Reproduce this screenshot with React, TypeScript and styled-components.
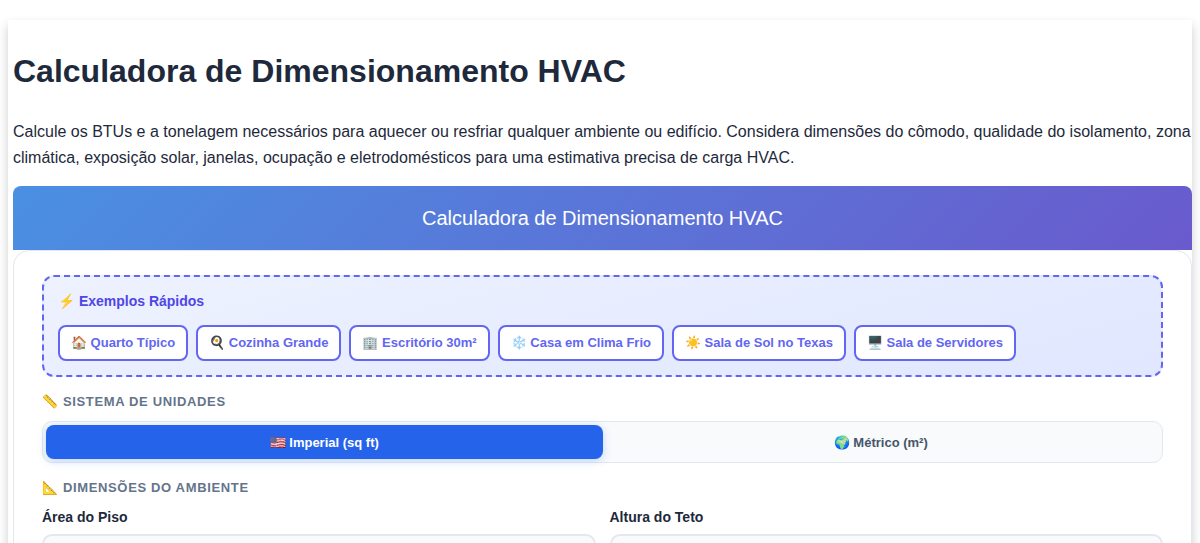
import React, { useState } from "react";
import styled, { createGlobalStyle } from "styled-components";

const GlobalStyle = createGlobalStyle`
  *, *::before, *::after { box-sizing: border-box; }
  body {
    margin: 0;
    background: #ffffff;
    color: #1e293b;
    font-family: "Liberation Sans", Arial, sans-serif;
    font-size: 16px;
    line-height: 26px;
  }
  button, input { font-family: inherit; }
`;

const Page = styled.main`
  margin: 20px 8px;
  padding: 25px 0 28px 5px;
  background: #ffffff;
  box-shadow: 0 5px 10px rgba(0, 0, 0, 0.2);
`;

const PageTitle = styled.h1`
  margin: 0;
  font-size: 32px;
  line-height: 52px;
  font-weight: 700;
`;

const Intro = styled.p`
  margin: 22px 0 15px;
`;

const Banner = styled.header`
  padding: 16px;
  border-radius: 8px 8px 0 0;
  background: linear-gradient(135deg, #4a90e2, #6a5acd);
  color: #ffffff;
  font-size: 20px;
  line-height: 32px;
  text-align: center;
`;

const Card = styled.section`
  padding: 24px 28px;
  border: 1px solid #e2e8f0;
  border-radius: 16px;
  background: #ffffff;
`;

const Examples = styled.div`
  padding: 14px;
  border: 2px dashed #6366f1;
  border-radius: 12px;
  background: linear-gradient(165deg, #eef2ff, #e0e7ff);
`;

const ExamplesTitle = styled.h2`
  margin: 0 0 14px;
  color: #4f46e5;
  font-size: 14px;
  line-height: 20px;
  font-weight: 700;
`;

const ExampleList = styled.div`
  display: flex;
  flex-wrap: wrap;
  gap: 8px;
`;

const ExampleButton = styled.button`
  height: 36px;
  padding: 0 11px 2px;
  border: 2px solid #6366f1;
  border-radius: 8px;
  background: #ffffff;
  color: #6366f1;
  font-size: 13px;
  font-weight: 600;
  cursor: pointer;
`;

const SectionTitle = styled.h3`
  margin: 14px 0 8px;
  color: #64748b;
  font-size: 13px;
  line-height: 22px;
  font-weight: 700;
  letter-spacing: 0.05em;
  text-transform: uppercase;
`;

const Toggle = styled.div`
  display: flex;
  padding: 3px;
  border: 1px solid #e2e8f0;
  border-radius: 10px;
  background: #f8fafc;
`;

const ToggleButton = styled.button<{ $active: boolean }>`
  flex: 1;
  height: 34px;
  border: 0;
  border-radius: 8px;
  background: ${(p) => (p.$active ? "#2563eb" : "transparent")};
  box-shadow: ${(p) => (p.$active ? "0 2px 8px rgba(37, 99, 235, 0.25)" : "none")};
  color: ${(p) => (p.$active ? "#ffffff" : "#475569")};
  font-size: 13px;
  font-weight: 600;
  cursor: pointer;
`;

const Fields = styled.div`
  display: grid;
  grid-template-columns: 1fr 1fr;
  gap: 14px;
`;

const Field = styled.div`
  display: flex;
  flex-direction: column;
  gap: 7px;
`;

const FieldLabel = styled.label`
  font-size: 14px;
  line-height: 20px;
  font-weight: 600;
`;

const FieldInput = styled.input`
  width: 100%;
  height: 44px;
  padding: 0 14px;
  border: 2px solid #e2e8f0;
  border-radius: 10px;
  background: #f8fafc;
  color: #1e293b;
  font-size: 16px;
`;

const examples = [
  "🏠 Quarto Típico",
  "🍳 Cozinha Grande",
  "🏢 Escritório 30m²",
  "❄️ Casa em Clima Frio",
  "☀️ Sala de Sol no Texas",
  "🖥️ Sala de Servidores",
];

const units = ["🇺🇸 Imperial (sq ft)", "🌍 Métrico (m²)"];

export default function App() {
  const [unit, setUnit] = useState(0);

  return (
    <>
      <GlobalStyle />
      <Page>
        <PageTitle>Calculadora de Dimensionamento HVAC</PageTitle>
        <Intro>
          Calcule os BTUs e a tonelagem necessários para aquecer ou resfriar qualquer ambiente ou
          edifício. Considera dimensões do cômodo, qualidade do isolamento, zona climática,
          exposição solar, janelas, ocupação e eletrodomésticos para uma estimativa precisa de carga
          HVAC.
        </Intro>
        <Banner>Calculadora de Dimensionamento HVAC</Banner>
        <Card>
          <Examples>
            <ExamplesTitle>⚡ Exemplos Rápidos</ExamplesTitle>
            <ExampleList>
              {examples.map((name) => (
                <ExampleButton key={name} type="button">
                  {name}
                </ExampleButton>
              ))}
            </ExampleList>
          </Examples>
          <SectionTitle>📏 Sistema de Unidades</SectionTitle>
          <Toggle>
            {units.map((name, i) => (
              <ToggleButton
                key={name}
                type="button"
                $active={unit === i}
                aria-pressed={unit === i}
                onClick={() => setUnit(i)}
              >
                {name}
              </ToggleButton>
            ))}
          </Toggle>
          <SectionTitle>📐 Dimensões do Ambiente</SectionTitle>
          <Fields>
            <Field>
              <FieldLabel htmlFor="floor-area">Área do Piso</FieldLabel>
              <FieldInput id="floor-area" type="number" />
            </Field>
            <Field>
              <FieldLabel htmlFor="ceiling-height">Altura do Teto</FieldLabel>
              <FieldInput id="ceiling-height" type="number" />
            </Field>
          </Fields>
        </Card>
      </Page>
    </>
  );
}
